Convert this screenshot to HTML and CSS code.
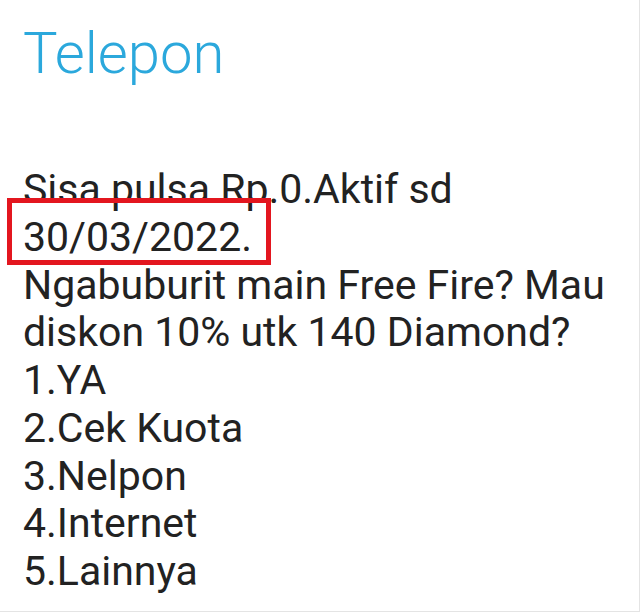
FILE: index.html
```html
<!DOCTYPE html>
<html>
<head>
<meta charset="utf-8">
<link rel="stylesheet" href="styles.css">
</head>
<body>
<div class="screen">
  <h1 class="title">Telepon</h1>
  <div class="message">
    <div class="line">Sisa pulsa Rp.0.Aktif sd</div>
    <div class="line"><span class="mark">30/03/2022.</span></div>
    <div class="line">Ngabuburit main Free Fire? Mau</div>
    <div class="line">diskon 10% utk 140 Diamond?</div>
    <div class="line">1.YA</div>
    <div class="line">2.Cek Kuota</div>
    <div class="line">3.Nelpon</div>
    <div class="line">4.Internet</div>
    <div class="line">5.Lainnya</div>
  </div>
</div>
</body>
</html>
```
FILE: styles.css
```css
html, body {
  margin: 0;
  padding: 0;
  background: #ffffff;
}
.screen {
  width: 640px;
  height: 612px;
  box-sizing: border-box;
  padding: 18px 0 0 23px;
  border-right: 1px solid #e4e4e4;
  border-bottom: 1px solid #e4e4e4;
  overflow: hidden;
  font-family: Roboto, "Noto Sans", sans-serif;
}
.title {
  margin: 0;
  font-size: 58px;
  font-weight: 300;
  line-height: 70px;
  color: #2ba8dc;
}
.message {
  margin-top: 78px;
  font-size: 41px;
  line-height: 47.75px;
  color: #222222;
}
.line {
  white-space: nowrap;
}
.mark {
  position: relative;
}
.mark::after {
  content: "";
  position: absolute;
  left: -16px;
  top: -15px;
  width: 254px;
  height: 57px;
  border: 5px solid #e3161f;
}
```
